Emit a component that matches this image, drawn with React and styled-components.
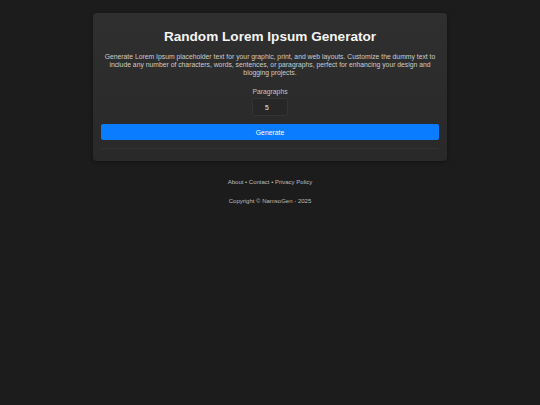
import styled, { createGlobalStyle } from "styled-components"
import { useState } from "react"

const GlobalStyle = createGlobalStyle`
  html, body {
    margin: 0;
    padding: 0;
    background: #1c1c1c;
    font-family: "Liberation Sans", Arial, sans-serif;
    -webkit-font-smoothing: antialiased;
  }
`

export default function App() {
  const [count, setCount] = useState(5);

  return (
    <Page>
      <GlobalStyle />
      <Card>
        <Title>Random Lorem Ipsum Generator</Title>
        <Intro>
          Generate Lorem Ipsum placeholder text for your graphic, print, and web layouts. Customize the dummy text to
          include any number of characters, words, sentences, or paragraphs, perfect for enhancing your design and
          blogging projects.
        </Intro>
        <Field>
          <label htmlFor="count">Paragraphs</label>
          <input id="count" type="text" value={count} onChange={e => setCount(e.target.value)} />
        </Field>
        <Button>Generate</Button>
        <Output />
      </Card>
      <Footer>
        <p><a>About</a> • <a>Contact</a> • <a>Privacy Policy</a></p>
        <p>Copyright © NamsoGen - 2025</p>
      </Footer>
    </Page>
  )
}

const Page = styled.div`
  min-height: 405px;
  padding-top: 13px;
  display: flex;
  flex-direction: column;
  align-items: center;
`

const Card = styled.div`
  width: 354px;
  box-sizing: border-box;
  padding: 15px 8px 12px;
  background: linear-gradient(#2f2f2f, #292929);
  border-radius: 4px;
  box-shadow: 0 1px 4px rgba(0, 0, 0, 0.4);
  display: flex;
  flex-direction: column;
  align-items: center;
`

const Title = styled.h1`
  margin: 0 0 7px;
  font-size: 13.6px;
  line-height: 18px;
  font-weight: bold;
  color: #f4f4f4;
`

const Intro = styled.p`
  margin: 0 0 10px;
  font-size: 6.8px;
  line-height: 8px;
  color: #cccccc;
  text-align: center;
`

const Field = styled.div`
  display: flex;
  flex-direction: column;
  align-items: center;
  gap: 2px;
  margin-bottom: 8px;

  label {
    font-size: 6.8px;
    line-height: 9px;
    color: #c4c4c4;
  }

  input {
    width: 36px;
    height: 18px;
    box-sizing: border-box;
    background: #272727;
    border: 1px solid #343434;
    border-radius: 2px;
    color: #ececec;
    font-family: inherit;
    font-size: 6.8px;
    text-align: center;
    outline: none;
    padding: 0 6px 0 0;
  }
`

const Button = styled.button`
  width: 100%;
  height: 16px;
  padding: 0;
  border: none;
  border-radius: 2px;
  background: #0a7cff;
  color: #ffffff;
  font-family: inherit;
  font-size: 6.8px;
  cursor: pointer;
`

const Output = styled.div`
  width: 100%;
  margin-top: 8px;
  border-top: 1px solid #343434;
`

const Footer = styled.footer`
  margin-top: 17px;
  text-align: center;
  font-size: 6px;
  color: #bdbdbd;

  p {
    margin: 0 0 11px;
    line-height: 8px;
  }

  a {
    color: #bdbdbd;
  }
`
